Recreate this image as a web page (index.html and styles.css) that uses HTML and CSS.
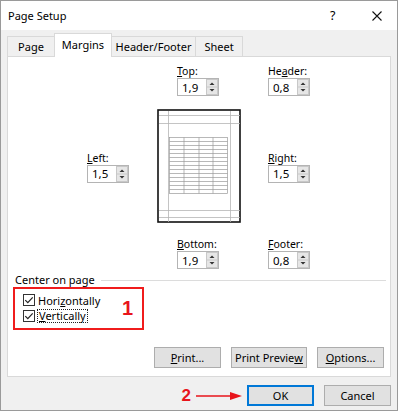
FILE: index.html
```html
<!DOCTYPE html>
<html>
<head>
<meta charset="utf-8">
<link rel="stylesheet" href="styles.css">
</head>
<body>
<div class="dialog">
  <div class="titlebar">
    <span class="title">Page Setup</span>
    <span class="help">?</span>
    <svg class="close" width="10" height="10" viewBox="0 0 10 10"><path d="M0.5 0.5 L9.5 9.5 M9.5 0.5 L0.5 9.5" stroke="#111" stroke-width="1.1" fill="none"/></svg>
  </div>
  <div class="body">
    <div class="tabs">
      <div class="tab t-page">Page</div>
      <div class="tab active t-margins">Margins</div>
      <div class="tab t-hf">Header/Footer</div>
      <div class="tab t-sheet">Sheet</div>
    </div>
    <div class="panel">
      <div class="margins">
        <div class="group g-top">
          <div class="lbl"><u>T</u>op:</div>
          <div class="spin"><span class="val">1,9</span><svg class="arrows" width="12" height="16" viewBox="0 0 12 16"><rect x="0.5" y="0.5" width="11" height="15" fill="#e6e6e6" stroke="#c8c8c8"/><line x1="1" y1="8" x2="11" y2="8" stroke="#c8c8c8"/><path d="M3.5 6 L6 3.5 L8.5 6 Z" fill="#333"/><path d="M3.5 10 L6 12.5 L8.5 10 Z" fill="#333"/></svg></div>
        </div>
        <div class="group g-header">
          <div class="lbl">He<u>a</u>der:</div>
          <div class="spin"><span class="val">0,8</span><svg class="arrows" width="12" height="16" viewBox="0 0 12 16"><rect x="0.5" y="0.5" width="11" height="15" fill="#e6e6e6" stroke="#c8c8c8"/><line x1="1" y1="8" x2="11" y2="8" stroke="#c8c8c8"/><path d="M3.5 6 L6 3.5 L8.5 6 Z" fill="#333"/><path d="M3.5 10 L6 12.5 L8.5 10 Z" fill="#333"/></svg></div>
        </div>
        <div class="group g-left">
          <div class="lbl"><u>L</u>eft:</div>
          <div class="spin"><span class="val">1,5</span><svg class="arrows" width="12" height="16" viewBox="0 0 12 16"><rect x="0.5" y="0.5" width="11" height="15" fill="#e6e6e6" stroke="#c8c8c8"/><line x1="1" y1="8" x2="11" y2="8" stroke="#c8c8c8"/><path d="M3.5 6 L6 3.5 L8.5 6 Z" fill="#333"/><path d="M3.5 10 L6 12.5 L8.5 10 Z" fill="#333"/></svg></div>
        </div>
        <svg class="preview" width="85" height="115" viewBox="0 0 85 115">
          <rect x="1" y="1" width="82" height="112" fill="#fff" stroke="#111" stroke-width="1.6"/>
          <g stroke="#b5b5b5" stroke-width="0.8" fill="none">
            <line x1="2" y1="6.5" x2="83" y2="6.5"/>
            <line x1="2" y1="14.5" x2="83" y2="14.5"/>
            <line x1="2" y1="101.5" x2="83" y2="101.5"/>
            <line x1="2" y1="108.5" x2="83" y2="108.5"/>
            <line x1="11.5" y1="2" x2="11.5" y2="113"/>
            <line x1="73.5" y1="2" x2="73.5" y2="113"/>
          </g>
          <g stroke="#9a9a9a" stroke-width="0.7" fill="none">
            <rect x="12.5" y="28.5" width="58" height="56"/>
            <line x1="27" y1="28.5" x2="27" y2="84.5"/>
            <line x1="42" y1="28.5" x2="42" y2="84.5"/>
            <line x1="56" y1="28.5" x2="56" y2="84.5"/>
            <line x1="12.5" y1="32.5" x2="70.5" y2="32.5"/>
            <line x1="12.5" y1="36.5" x2="70.5" y2="36.5"/>
            <line x1="12.5" y1="40.5" x2="70.5" y2="40.5"/>
            <line x1="12.5" y1="44.5" x2="70.5" y2="44.5"/>
            <line x1="12.5" y1="48.5" x2="70.5" y2="48.5"/>
            <line x1="12.5" y1="52.5" x2="70.5" y2="52.5"/>
            <line x1="12.5" y1="56.5" x2="70.5" y2="56.5"/>
            <line x1="12.5" y1="60.5" x2="70.5" y2="60.5"/>
            <line x1="12.5" y1="64.5" x2="70.5" y2="64.5"/>
            <line x1="12.5" y1="68.5" x2="70.5" y2="68.5"/>
            <line x1="12.5" y1="72.5" x2="70.5" y2="72.5"/>
            <line x1="12.5" y1="76.5" x2="70.5" y2="76.5"/>
            <line x1="12.5" y1="80.5" x2="70.5" y2="80.5"/>
          </g>
        </svg>
        <div class="group g-right">
          <div class="lbl"><u>R</u>ight:</div>
          <div class="spin"><span class="val">1,5</span><svg class="arrows" width="12" height="16" viewBox="0 0 12 16"><rect x="0.5" y="0.5" width="11" height="15" fill="#e6e6e6" stroke="#c8c8c8"/><line x1="1" y1="8" x2="11" y2="8" stroke="#c8c8c8"/><path d="M3.5 6 L6 3.5 L8.5 6 Z" fill="#333"/><path d="M3.5 10 L6 12.5 L8.5 10 Z" fill="#333"/></svg></div>
        </div>
        <div class="group g-bottom">
          <div class="lbl"><u>B</u>ottom:</div>
          <div class="spin"><span class="val">1,9</span><svg class="arrows" width="12" height="16" viewBox="0 0 12 16"><rect x="0.5" y="0.5" width="11" height="15" fill="#e6e6e6" stroke="#c8c8c8"/><line x1="1" y1="8" x2="11" y2="8" stroke="#c8c8c8"/><path d="M3.5 6 L6 3.5 L8.5 6 Z" fill="#333"/><path d="M3.5 10 L6 12.5 L8.5 10 Z" fill="#333"/></svg></div>
        </div>
        <div class="group g-footer">
          <div class="lbl"><u>F</u>ooter:</div>
          <div class="spin"><span class="val">0,8</span><svg class="arrows" width="12" height="16" viewBox="0 0 12 16"><rect x="0.5" y="0.5" width="11" height="15" fill="#e6e6e6" stroke="#c8c8c8"/><line x1="1" y1="8" x2="11" y2="8" stroke="#c8c8c8"/><path d="M3.5 6 L6 3.5 L8.5 6 Z" fill="#333"/><path d="M3.5 10 L6 12.5 L8.5 10 Z" fill="#333"/></svg></div>
        </div>
      </div>
      <div class="center-head"><span>Center on page</span><span class="rule"></span></div>
      <div class="redbox">
        <div class="checks">
          <div class="check"><svg width="12" height="12" viewBox="0 0 12 12"><rect x="0.5" y="0.5" width="11" height="11" fill="#fff" stroke="#333"/><path d="M2.3 6.2 L4.8 8.7 L9.7 3.3" stroke="#222" stroke-width="1.2" fill="none"/></svg><span>Hori<u>z</u>ontally</span></div>
          <div class="check"><svg width="12" height="12" viewBox="0 0 12 12"><rect x="0.5" y="0.5" width="11" height="11" fill="#fff" stroke="#333"/><path d="M2.3 6.2 L4.8 8.7 L9.7 3.3" stroke="#222" stroke-width="1.2" fill="none"/></svg><span class="focus"><u>V</u>ertically</span></div>
        </div>
        <span class="num num1">1</span>
      </div>
      <div class="panel-buttons">
        <div class="btn b-print"><u>P</u>rint...</div>
        <div class="btn b-preview">Print Previe<u>w</u></div>
        <div class="btn b-options"><u>O</u>ptions...</div>
      </div>
    </div>
    <div class="footer">
      <span class="num num2">2</span>
      <svg class="arrow" width="46" height="10" viewBox="0 0 46 10"><line x1="0" y1="5" x2="36" y2="5" stroke="#e8141b" stroke-width="1.6"/><path d="M34 1 L46 5 L34 9 Z" fill="#e8141b"/></svg>
      <div class="btn b-ok">OK</div>
      <div class="btn b-cancel">Cancel</div>
    </div>
  </div>
</div>
</body>
</html>
```
FILE: styles.css
```css
* { box-sizing: border-box; }
html, body { margin: 0; padding: 0; background: #fff; }
body {
  font-family: "Noto Sans", "Open Sans", sans-serif;
  font-size: 11px;
  color: #000;
}
u { text-decoration: underline; text-underline-offset: 1px; }

.dialog {
  width: 398px;
  height: 411px;
  border: 1px solid #9a9a9a;
  background: #f0f0f0;
  display: flex;
  flex-direction: column;
}
.titlebar {
  height: 29px;
  background: #fff;
  display: flex;
  align-items: center;
  padding-left: 7px;
}
.title { font-size: 11px; flex: 1; }
.help { font-size: 12.5px; width: 8px; margin-right: 34px; }
.close { margin-right: 15px; }

.body {
  flex: 1;
  display: flex;
  flex-direction: column;
  padding: 3px 6px 0 6px;
}
.tabs {
  height: 23px;
  display: flex;
  align-items: flex-end;
}
.tab {
  height: 20px;
  border: 1px solid #d9d9d9;
  border-bottom: none;
  background: #f0f0f0;
  display: flex;
  align-items: center;
  justify-content: center;
  font-size: 11px;
  margin-left: -1px;
}
.t-page { width: 48px; margin-left: 0; }
.t-margins { width: 58px; }
.t-hf { width: 85px; }
.t-sheet { width: 48px; }
.tab.active {
  height: 24px;
  margin-bottom: -1px;
  background: #fff;
  position: relative;
  z-index: 1;
  padding-bottom: 3px;
}

.panel {
  height: 321px;
  border: 1px solid #d9d9d9;
  background: #fff;
  display: flex;
  flex-direction: column;
  padding-top: 7px;
}
.margins {
  display: grid;
  grid-template-columns: 41px 29px 85px 26px 44px;
  row-gap: 13px;
  margin-left: 79px;
}
.group { display: flex; flex-direction: column; }
.lbl { line-height: 14px; height: 14px; font-size: 10.5px; }
.spin {
  width: 42px;
  height: 18px;
  border: 1px solid #b4b4b4;
  background: #fff;
  display: flex;
  align-items: center;
  justify-content: space-between;
  padding: 0 0 0 4px;
}
.spin .val { font-size: 11.5px; }
.arrows { display: block; }
.g-top { grid-column: 3; grid-row: 1; margin-left: 20px; }
.g-header { grid-column: 5; grid-row: 1; }
.g-left { grid-column: 1; grid-row: 2; align-self: center; }
.preview { grid-column: 3; grid-row: 2; display: block; }
.g-right { grid-column: 5; grid-row: 2; align-self: center; }
.g-bottom { grid-column: 3; grid-row: 3; margin-left: 20px; }
.g-footer { grid-column: 5; grid-row: 3; }

.center-head {
  margin-top: 4px;
  height: 14px;
  line-height: 14px;
  display: flex;
  align-items: center;
  padding-left: 7px;
  padding-right: 4px;
}
.center-head .rule {
  flex: 1;
  height: 1px;
  background: #dcdcdc;
  margin-left: 6px;
}
.redbox {
  margin-left: 5px;
  width: 131px;
  height: 43px;
  border: 2px solid #f01c1c;
  display: flex;
  align-items: center;
  padding: 0 9px 0 8px;
}
.checks { flex: 1; display: flex; flex-direction: column; padding-bottom: 1px; }
.check {
  height: 16px;
  display: flex;
  align-items: center;
  gap: 3px;
}
.check svg { display: block; }
.focus { border: 1px dotted #222; padding: 0 1px; line-height: 12px; margin-left: -1px; }
.num {
  color: #e8141b;
  font-family: "Liberation Sans", Arial, sans-serif;
  font-weight: bold;
}
.num1 { font-size: 20px; }
.num2 { font-size: 17px; margin-right: 5px; }

.panel-buttons {
  margin-top: auto;
  margin-bottom: 8px;
  display: flex;
  justify-content: flex-end;
  gap: 10px;
  padding-right: 6px;
}
.btn {
  height: 21px;
  border: 1px solid #adadad;
  background: #e1e1e1;
  display: flex;
  align-items: center;
  justify-content: center;
  font-size: 11px;
}
.b-print { width: 67px; }
.b-preview { width: 76px; }
.b-options { width: 67px; }

.footer {
  margin-top: 8px;
  display: flex;
  align-items: center;
  justify-content: flex-end;
}
.arrow { display: block; margin-right: 5px; }
.b-ok {
  width: 67px;
  border-color: #0078d7;
  box-shadow: inset 0 0 0 1px #0078d7;
  margin-right: 10px;
}
.b-cancel { width: 67px; }
```
